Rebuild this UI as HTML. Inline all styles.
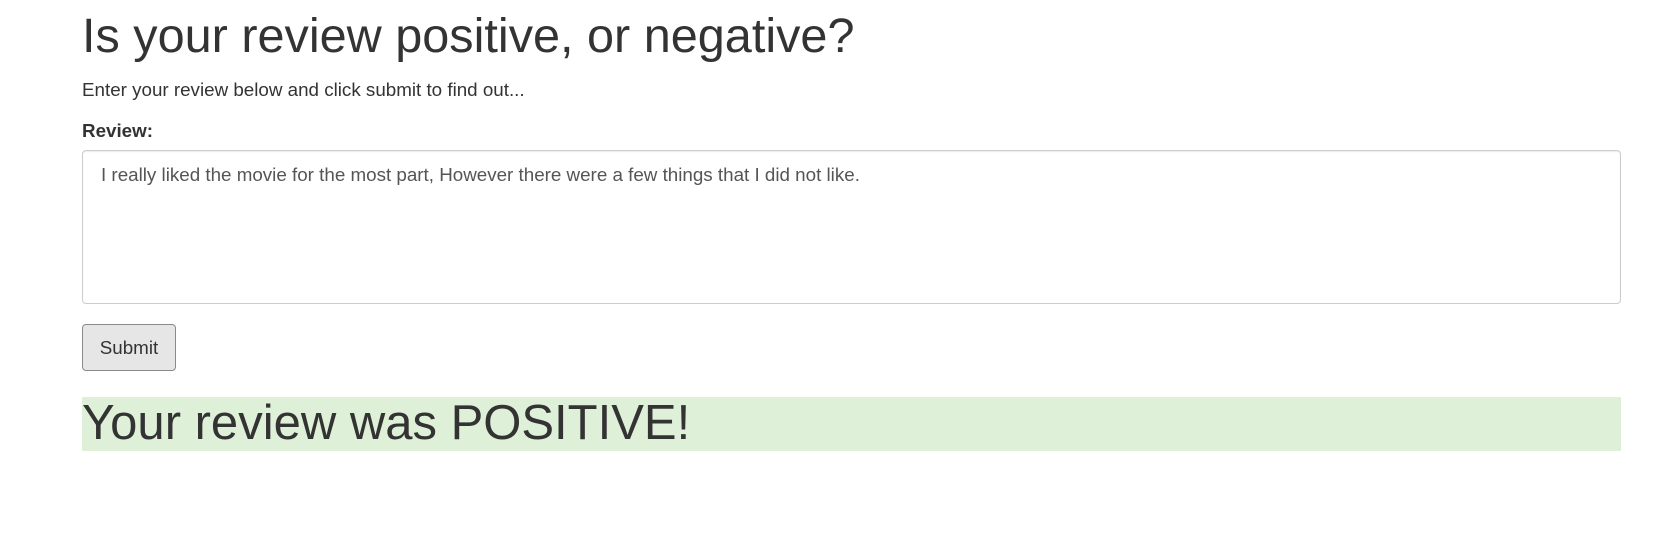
<!DOCTYPE html>
<html><head><meta charset="utf-8"><style>
html,body{margin:0;padding:0;background:#fff;width:1673px;height:547px;overflow:hidden}
body{font-family:"Liberation Sans",Arial,sans-serif;color:#333}
h1{position:absolute;left:82px;top:10px;margin:0;font-weight:400;font-size:48.6px;line-height:52px;white-space:nowrap}
.p{position:absolute;left:82px;top:79px;font-size:18.8px;line-height:22px}
.l{position:absolute;left:82px;top:120px;font-size:18.8px;font-weight:700;line-height:22px}
.ta{position:absolute;left:82px;top:150px;width:1537px;height:152px;border:1px solid #ccc;border-radius:4px;box-shadow:inset 0 1px 1px rgba(0,0,0,.075)}
.ta span{position:absolute;left:18px;top:13px;font-size:18.8px;color:#555;line-height:22px;white-space:nowrap}
.btn{position:absolute;left:82px;top:324px;border:1px solid #8a8a8a;border-radius:4px;background:#e6e6e6;font-size:18.8px;line-height:45px;text-align:center;box-sizing:border-box;width:94px;height:47px}
.g{position:absolute;left:82px;top:397px;width:1539px;height:54px;background:#dff0d8}
.g span{position:absolute;left:0;top:-2px;font-size:49px;line-height:56px;white-space:nowrap}
</style></head><body>
<h1>Is your review positive, or negative?</h1>
<div class="p">Enter your review below and click submit to find out...</div>
<div class="l">Review:</div>
<div class="ta"><span>I really liked the movie for the most part, However there were a few things that I did not like.</span></div>
<div class="btn">Submit</div>
<div class="g"><span>Your review was POSITIVE!</span></div>
</body></html>
